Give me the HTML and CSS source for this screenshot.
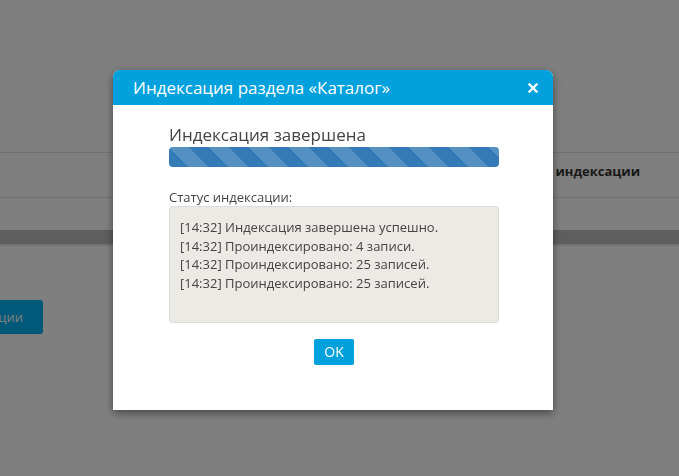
FILE: index.html
```html
<!DOCTYPE html>
<html lang="ru">
<head>
<meta charset="utf-8">
<title>Индексация</title>
<link rel="stylesheet" href="styles.css">
</head>
<body>
<div class="page">
  <div class="page-top"></div>
  <div class="table-head">
    <span class="th">Дата последней индексации</span>
  </div>
  <div class="table-gap"></div>
  <div class="band"></div>
  <div class="actions">
    <button class="run-btn">Запуск индексации</button>
  </div>
</div>

<div class="overlay">
  <div class="dialog">
    <div class="dialog-header">
      <span class="dialog-title">Индексация раздела «Каталог»</span>
      <svg class="close" width="10" height="10" viewBox="0 0 10 10" aria-hidden="true">
        <path d="M1.4 1.4 L8.6 8.6 M8.6 1.4 L1.4 8.6" stroke="#fff" stroke-width="2.2" stroke-linecap="square"/>
      </svg>
    </div>
    <div class="dialog-body">
      <div class="status-title">Индексация завершена</div>
      <div class="progress"><div class="progress-bar"></div></div>
      <div class="log-label">Статус индексации:</div>
      <div class="log">
        <div>[14:32] Индексация завершена успешно.</div>
        <div>[14:32] Проиндексировано: 4 записи.</div>
        <div>[14:32] Проиндексировано: 25 записей.</div>
        <div>[14:32] Проиндексировано: 25 записей.</div>
      </div>
      <div class="footer">
        <button class="ok-btn">OK</button>
      </div>
    </div>
  </div>
</div>
</body>
</html>
```

FILE: styles.css
```css
html, body {
  margin: 0;
  padding: 0;
}
body {
  background: #fff;
  font-family: "Open Sans", "DejaVu Sans", sans-serif;
  color: #333;
  overflow: hidden;
  height: 476px;
}
.page {
  width: 679px;
}
.page-top {
  height: 152px;
  border-bottom: 1px solid #e2e2e2;
}
.table-head {
  height: 45px;
  box-sizing: border-box;
  padding-top: 9px;
  padding-right: 39px;
  display: flex;
  justify-content: flex-end;
  border-bottom: 1px solid #e2e2e2;
}
.th {
  font-size: 13px;
  font-weight: 700;
  line-height: 18px;
  color: #333;
}
.table-gap {
  height: 32px;
}
.band {
  height: 14px;
  background: #bcbcbc;
  border-bottom: 2px solid #e6e6e6;
}
.actions {
  display: flex;
  margin-top: 54px;
}
.run-btn {
  margin-left: -104px;
  height: 34px;
  width: 147px;
  padding: 0 20px 0 0;
  text-align: right;
  border: none;
  border-radius: 3px;
  background: #00b2f2;
  color: #fff;
  font-family: "Open Sans", "DejaVu Sans", sans-serif;
  font-size: 13px;
}

.overlay {
  position: fixed;
  inset: 0;
  background: rgba(0, 0, 0, 0.5);
}
.dialog {
  margin: 70px 0 0 113px;
  width: 440px;
  height: 340px;
  background: #fff;
  border-radius: 7px 7px 0 0;
  box-shadow: 0 3px 8px rgba(0, 0, 0, 0.45);
}
.dialog-header {
  height: 35px;
  background: #00a1dc;
  border-radius: 7px 7px 0 0;
  display: flex;
  align-items: center;
  justify-content: space-between;
  padding: 0 15px 0 20px;
}
.dialog-title {
  color: #fff;
  font-size: 17px;
  line-height: 35px;
}
.close {
  display: block;
  margin-top: 1px;
}
.dialog-body {
  width: 330px;
  margin: 0 auto;
  padding-top: 20px;
  transform: translateX(1px);
}
.status-title {
  font-size: 17px;
  line-height: 20px;
  color: #444;
}
.progress {
  margin-top: 2px;
  height: 20px;
  border-radius: 4px;
  overflow: hidden;
  background: #f5f5f5;
}
.progress-bar {
  height: 100%;
  width: 100%;
  background-color: #337ab7;
  background-image: linear-gradient(45deg,
    rgba(255,255,255,.17) 25%, transparent 25%, transparent 50%,
    rgba(255,255,255,.17) 50%, rgba(255,255,255,.17) 75%, transparent 75%, transparent);
  background-size: 40px 40px;
}
.log-label {
  margin-top: 22px;
  font-size: 13px;
  line-height: 17px;
  color: #444;
}
.log {
  height: 117px;
  box-sizing: border-box;
  padding: 11px 10px;
  background: #ebeae5;
  border: 1px solid #dcdcd8;
  border-radius: 3px;
  font-size: 13px;
  line-height: 18.6px;
  color: #444;
}
.footer {
  display: flex;
  justify-content: center;
  margin-top: 16px;
}
.ok-btn {
  width: 40px;
  height: 26px;
  padding: 0;
  border: none;
  border-radius: 2px;
  background: #00a1dc;
  color: #fff;
  font-family: "Open Sans", "DejaVu Sans", sans-serif;
  font-size: 14px;
  line-height: 26px;
}
```
